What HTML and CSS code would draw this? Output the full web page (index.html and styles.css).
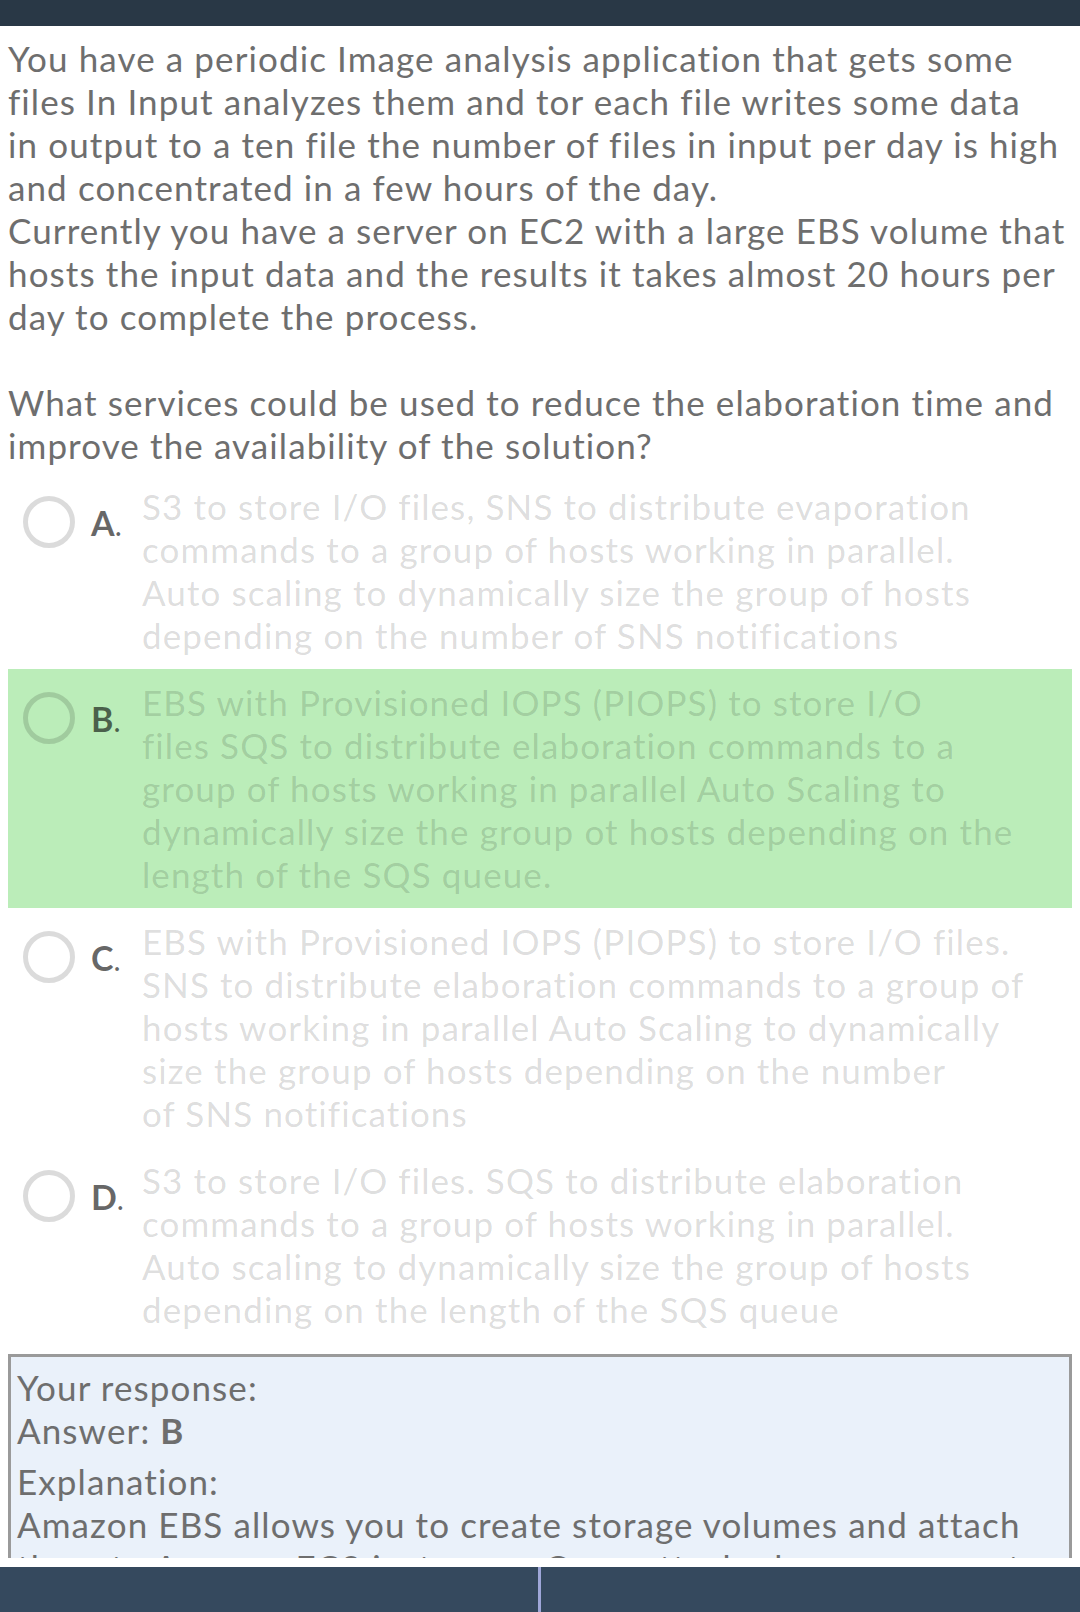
FILE: index.html
```html
<!DOCTYPE html>
<html lang="en">
<head>
<meta charset="utf-8">
<title>Question</title>
<link rel="stylesheet" href="styles.css">
</head>
<body>
<div class="app">
  <header class="topbar"></header>
  <main class="content">
    <div class="question">You have a periodic Image analysis application that gets some<br>files In Input analyzes them and tor each file writes some data<br>in output to a ten file the number of files in input per day is high<br>and concentrated in a few hours of the day.<br>Currently you have a server on EC2 with a large EBS volume that<br>hosts the input data and the results it takes almost 20 hours per<br>day to complete the process.<br><br>What services could be used to reduce the elaboration time and<br>improve the availability of the solution?</div>
    <div class="options">
      <div class="option">
        <span class="radio"></span>
        <span class="label">A<span class="dot">.</span></span>
        <span class="text">S3 to store I/O files, SNS to distribute evaporation<br>commands to a group of hosts working in parallel.<br>Auto scaling to dynamically size the group of hosts<br>depending on the number of SNS notifications</span>
      </div>
      <div class="option correct">
        <span class="radio"></span>
        <span class="label">B<span class="dot">.</span></span>
        <span class="text">EBS with Provisioned IOPS (PIOPS) to store I/O<br>files SQS to distribute elaboration commands to a<br>group of hosts working in parallel Auto Scaling to<br>dynamically size the group ot hosts depending on the<br>length of the SQS queue.</span>
      </div>
      <div class="option">
        <span class="radio"></span>
        <span class="label">C<span class="dot">.</span></span>
        <span class="text">EBS with Provisioned IOPS (PIOPS) to store I/O files.<br>SNS to distribute elaboration commands to a group of<br>hosts working in parallel Auto Scaling to dynamically<br>size the group of hosts depending on the number<br>of SNS notifications</span>
      </div>
      <div class="option">
        <span class="radio"></span>
        <span class="label">D<span class="dot">.</span></span>
        <span class="text">S3 to store I/O files. SQS to distribute elaboration<br>commands to a group of hosts working in parallel.<br>Auto scaling to dynamically size the group of hosts<br>depending on the length of the SQS queue</span>
      </div>
    </div>
    <div class="response">
      <div class="line">Your response:</div>
      <div class="line">Answer: <b>B</b></div>
      <div class="explain">
        <div class="line">Explanation:</div>
        <div class="line">Amazon EBS allows you to create storage volumes and attach them to Amazon EC2 instances. Once attached, you can create a file system on top of these volumes, run a database, or use them in any other way you would use a block device.</div>
      </div>
    </div>
  </main>
  <footer class="bottombar">
    <div class="half"></div>
    <div class="half right"></div>
  </footer>
</div>
</body>
</html>
```

FILE: styles.css
```css
html, body {
  margin: 0;
  padding: 0;
  background: #ffffff;
}

body {
  font-family: Lato, "Open Sans", sans-serif;
  font-variant-ligatures: none;
  color: #6e6e6e;
  font-size: 35px;
  line-height: 43px;
  letter-spacing: 1.1px;
}

.app {
  display: flex;
  flex-direction: column;
  height: 1612px;
  overflow: hidden;
}

.topbar {
  height: 26px;
  flex: 0 0 26px;
  background: #293846;
}

.content {
  flex: 1 1 auto;
  overflow: hidden;
  padding: 11px 8px 0 8px;
  min-height: 0;
}

.question {
  margin-bottom: 6px;
  white-space: nowrap;
}

.options {
  display: flex;
  flex-direction: column;
}

.option {
  display: flex;
  align-items: flex-start;
  padding: 12px 0;
}

.option.correct {
  background: #bbedb9;
}

.radio {
  flex: 0 0 52px;
  width: 52px;
  height: 52px;
  box-sizing: border-box;
  border: 5px solid rgba(0, 0, 0, 0.14);
  border-radius: 50%;
  margin: 11px 0 0 15px;
}

.label {
  flex: 0 0 51px;
  width: 51px;
  margin-left: 16px;
  margin-top: 16px;
  font-weight: 700;
  font-size: 34px;
  letter-spacing: 0;
  color: rgba(0, 0, 0, 0.6);
}

.label .dot {
  font-weight: 400;
  font-size: 30px;
}

.text {
  flex: 1 1 auto;
  color: rgba(0, 0, 0, 0.15);
  white-space: nowrap;
}

.response {
  margin-top: 11px;
  border: 3px solid #9a9a9a;
  background: #eaf1fa;
  padding: 9px 20px 0 6px;
}

.response b {
  font-weight: 700;
}

.explain {
  margin-top: 8px;
}

.bottombar {
  flex: 0 0 45px;
  height: 45px;
  margin-top: 9px;
  background: #35495e;
  display: grid;
  grid-template-columns: 1fr 1fr;
}

.half.right {
  border-left: 3px solid #9fa7d9;
  margin-left: -2px;
}
```
